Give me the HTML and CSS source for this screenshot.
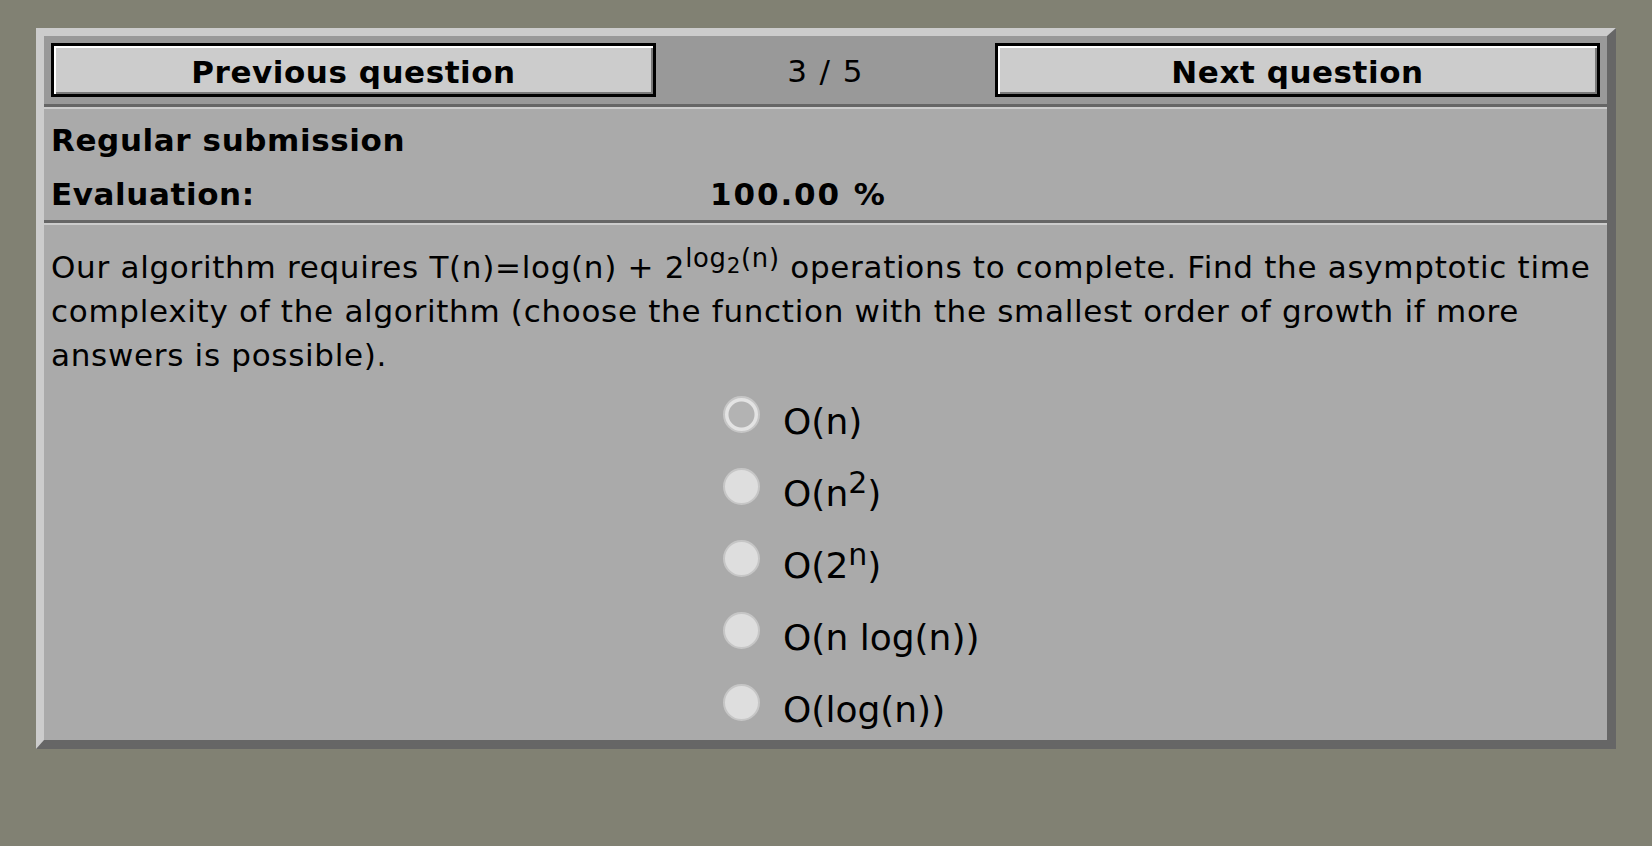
FILE: index.html
```html
<!DOCTYPE html>
<html lang="en">
<head>
<meta charset="utf-8">
<title>Question 3 / 5</title>
<link rel="stylesheet" href="styles.css">
</head>
<body>
<div class="frame">
  <div class="nav">
    <button class="nav-btn" type="button">Previous question</button>
    <div class="counter">3 / 5</div>
    <button class="nav-btn" type="button">Next question</button>
  </div>
  <div class="status">
    <div class="status-title">Regular submission</div>
    <div class="status-row">
      <div class="status-label">Evaluation:</div>
      <div class="status-value">100.00 %</div>
    </div>
  </div>
  <div class="question">
    <p class="question-text">Our algorithm requires T(n)=log(n) + 2<sup>log<sub>2</sub>(n)</sup> operations to complete. Find the asymptotic time complexity of the algorithm (choose the function with the smallest order of growth if more answers is possible).</p>
    <div class="options">
      <label class="option"><input class="radio" type="radio" name="a" disabled checked><span class="option-text">O(n)</span></label>
      <label class="option"><input class="radio" type="radio" name="a" disabled><span class="option-text">O(n<sup>2</sup>)</span></label>
      <label class="option"><input class="radio" type="radio" name="a" disabled><span class="option-text">O(2<sup>n</sup>)</span></label>
      <label class="option"><input class="radio" type="radio" name="a" disabled><span class="option-text">O(n log(n))</span></label>
      <label class="option"><input class="radio" type="radio" name="a" disabled><span class="option-text">O(log(n))</span></label>
    </div>
  </div>
</div>
</body>
</html>
```
FILE: styles.css
```css
html, body {
  margin: 0;
  padding: 0;
  background: #818173;
}
body {
  font-family: "DejaVu Sans", Verdana, sans-serif;
  font-size: 31px;
  letter-spacing: 0.7px;
  color: #000;
  height: 846px;
  overflow: hidden;
}
.frame {
  box-sizing: border-box;
  width: 1580px;
  margin: 28px 0 0 36px;
  border-style: solid;
  border-width: 8px 9px 9px 8px;
  border-color: #cccccc #666666 #666666 #cccccc;
  background: #aaaaaa;
}
.nav {
  display: flex;
  align-items: center;
  padding: 7px;
  background: #999999;
  border-bottom: 3px solid #666666;
}
.nav-btn {
  box-sizing: border-box;
  width: 605px;
  height: 54px;
  padding: 4px 0 0;
  margin: 0;
  border: 3px solid #000;
  background: #cccccc;
  box-shadow: inset 2px 2px 0 #ffffff, inset -2px -2px 0 #7a7a7a;
  font-family: "DejaVu Sans", Verdana, sans-serif;
  font-size: 31px;
  font-weight: bold;
  letter-spacing: 0.55px;
  color: #000;
  line-height: 1;
}
.counter {
  flex: 1;
  text-align: center;
  line-height: 35px;
  letter-spacing: 1.4px;
  padding-top: 3px;
}
.status {
  border-top: 2px solid #cccccc;
  border-bottom: 3px solid #666666;
  padding: 14px 7px 8px;
  font-weight: bold;
  letter-spacing: 0.6px;
  line-height: 35px;
}
.status-row {
  display: grid;
  grid-template-columns: 659px 1fr;
  margin-top: 19px;
}
.status-value {
  letter-spacing: 1.9px;
}
.question {
  border-top: 2px solid #cccccc;
  padding: 14px 7px 0;
}
.question-text {
  margin: 0;
  line-height: 44px;
}
.question-text sup {
  line-height: 38px;
}
.question-text sub {
  line-height: 0;
}
.options {
  display: flex;
  flex-direction: column;
  align-items: flex-start;
  gap: 11px;
  margin-top: 14px;
  padding-left: 672px;
}
.option {
  display: flex;
  align-items: flex-start;
  height: 61px;
  font-size: 36px;
  letter-spacing: 0;
  line-height: 61px;
}
.option-text sup {
  line-height: 0;
}
.radio {
  -webkit-appearance: none;
  appearance: none;
  box-sizing: border-box;
  width: 37px;
  height: 37px;
  margin: 5px 23px 0 0;
  border-radius: 50%;
  border: 2px solid #c6c6c6;
  background: #dedede;
}
.radio:checked {
  background: radial-gradient(circle, #b3b3b3 0 12.5px, #e3e3e3 13.5px);
}
```
